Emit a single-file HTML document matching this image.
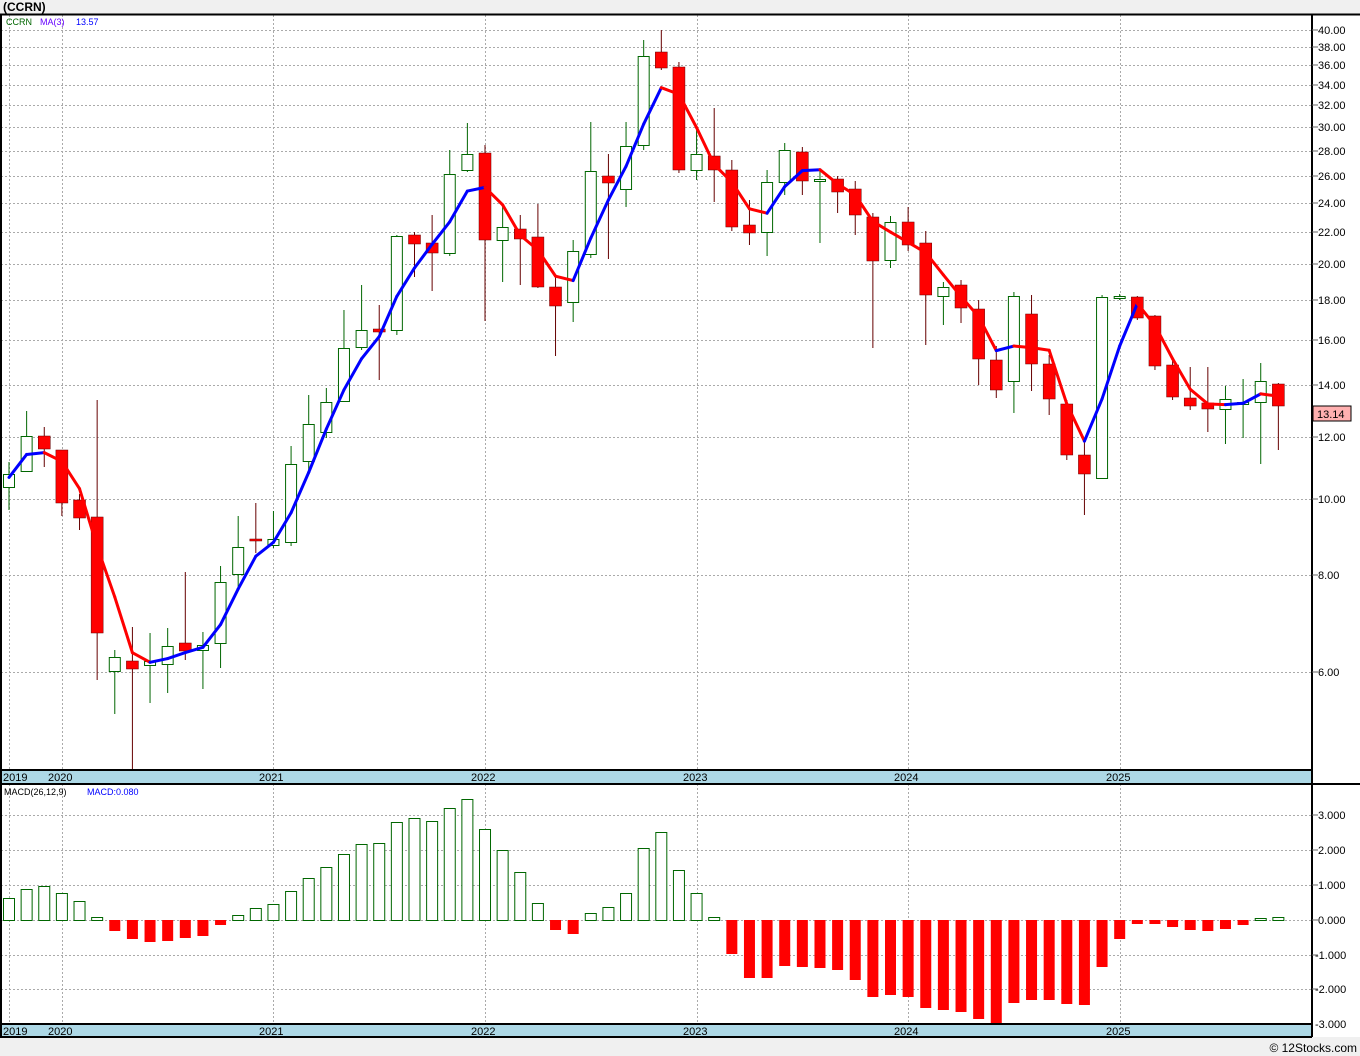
<!DOCTYPE html>
<html><head><meta charset="utf-8"><style>
body{margin:0;width:1360px;height:1056px;background:#f0f0f0;overflow:hidden;font-family:"Liberation Sans",sans-serif}
svg{position:absolute;left:0;top:0}
</style></head><body>
<svg id="s" width="1360" height="1056" xmlns="http://www.w3.org/2000/svg" font-family="Liberation Sans, sans-serif">
<rect x="0" y="0" width="1360" height="1056" fill="#f0f0f0"/>
<text x="3" y="11" font-size="12" font-weight="bold" fill="#000">(CCRN)</text>
<rect x="1" y="14" width="1311" height="756" fill="#fff"/>
<rect x="1" y="784" width="1311" height="240" fill="#fff"/>
<rect x="1312" y="14" width="48" height="1023" fill="#fff"/>
<g id="grid" stroke="#aaa" stroke-dasharray="2,2" stroke-width="1"></g>
<rect x="1" y="770" width="1311" height="13" fill="#add8e6"/>
<rect x="1" y="1024" width="1311" height="13" fill="#add8e6"/>
<g id="bars"></g>
<g id="candles"></g>
<g id="ma"></g>
<g stroke="#000" stroke-width="2" fill="none">
<line x1="0" y1="14.5" x2="1360" y2="14.5"/>
<line x1="1" y1="14" x2="1" y2="1037"/>
<line x1="1312" y1="14" x2="1312" y2="1037"/>
<line x1="0" y1="770" x2="1312" y2="770"/>
<line x1="0" y1="784" x2="1360" y2="784"/>
<line x1="0" y1="1024" x2="1312" y2="1024"/>
<line x1="0" y1="1037" x2="1312" y2="1037"/>
</g>
<g id="ticks" stroke="#666"></g>
<g font-size="11" fill="#000">
<text x="1318" y="34">40.00</text><text x="1318" y="51">38.00</text><text x="1318" y="69">36.00</text><text x="1318" y="89">34.00</text><text x="1318" y="109">32.00</text><text x="1318" y="131">30.00</text><text x="1318" y="155">28.00</text><text x="1318" y="180">26.00</text><text x="1318" y="207">24.00</text><text x="1318" y="236">22.00</text><text x="1318" y="268">20.00</text><text x="1318" y="304">18.00</text><text x="1318" y="344">16.00</text><text x="1318" y="389">14.00</text><text x="1318" y="441">12.00</text><text x="1318" y="503">10.00</text><text x="1318" y="579">8.00</text><text x="1318" y="676">6.00</text>
<text x="1318" y="819">3.000</text><text x="1318" y="854">2.000</text><text x="1318" y="889">1.000</text><text x="1318" y="924">0.000</text><text x="1315" y="959">-1.000</text><text x="1315" y="993">-2.000</text><text x="1315" y="1028">-3.000</text>
</g>
<rect x="1313" y="406" width="38" height="15" fill="#ffb0b0" stroke="#000"/>
<text x="1317" y="418" font-size="11">13.14</text>
<g font-size="11" fill="#000">
<text x="3" y="781">2019</text><text x="48" y="781">2020</text><text x="259" y="781">2021</text><text x="471" y="781">2022</text><text x="683" y="781">2023</text><text x="894" y="781">2024</text><text x="1106" y="781">2025</text>
<text x="3" y="1035">2019</text><text x="48" y="1035">2020</text><text x="259" y="1035">2021</text><text x="471" y="1035">2022</text><text x="683" y="1035">2023</text><text x="894" y="1035">2024</text><text x="1106" y="1035">2025</text>
</g>
<text x="6" y="25" font-size="9" fill="#060">CCRN</text>
<text x="40" y="25" font-size="9" fill="#60f">MA(3)</text>
<text x="76" y="25" font-size="9" fill="#00f">13.57</text>
<text x="4" y="795" font-size="9" fill="#000">MACD(26,12,9)</text>
<text x="87" y="795" font-size="9" fill="#00f">MACD:0.080</text>
<text x="1357" y="1052" font-size="12" text-anchor="end" fill="#000">© 12Stocks.com</text>
</svg>
<script>
var NS="http://www.w3.org/2000/svg";
function el(p,t,a){var e=document.createElementNS(NS,t);for(var k in a)e.setAttribute(k,a[k]);document.getElementById(p).appendChild(e);return e;}
var g=[30,47,65,85,105,127,151,176,203,232,264,300,340,385,437,499,575,672,815,850,885,920,955,989];
g.forEach(function(y){el("grid","line",{x1:1,x2:1312,y1:y+.5,y2:y+.5});el("ticks","line",{x1:1312,x2:1318,y1:y,y2:y});});
[9,62,273,485,697,908,1120].forEach(function(x){el("grid","line",{x1:x+.5,x2:x+.5,y1:15,y2:770});el("grid","line",{x1:x+.5,x2:x+.5,y1:784,y2:1037});});
// [bodyTop, bodyBot, wickTop, wickBot, up]
var C=[[474,487,462,510,1],[436,471,411,472,1],[436,449,427,467,0],[450,503,450,516,0],[500,518,494,530,0],[517,633,400,680,0],[657,671,650,714,1],[661,669,627,770,0],[661,665,633,703,1],[646,664,628,693,1],[643,651,572,660,0],[645,650,632,689,1],[582,643,566,668,1],[547,574,516,590,1],[539,541,503,553,0],[539,545,511,548,1],[464,542,446,546,1],[424,461,395,470,1],[402,432,388,438,1],[348,401,310,401,1],[330,347,285,350,1],[329,332,305,380,0],[236,330,235,335,1],[235,244,232,277,0],[243,253,215,291,0],[174,253,150,256,1],[154,170,123,172,1],[153,240,145,321,0],[227,240,205,282,1],[229,239,215,285,0],[237,287,204,288,0],[287,306,275,356,0],[251,302,240,322,1],[171,254,122,258,1],[176,183,154,259,0],[146,189,122,207,1],[56,145,40,150,1],[52,68,30,70,0],[67,170,62,173,0],[154,170,128,180,1],[156,170,108,202,0],[170,227,160,231,0],[225,233,200,245,0],[182,232,170,256,1],[150,182,143,195,1],[152,181,147,195,0],[179,180,170,243,1],[179,192,176,213,0],[189,215,181,235,0],[217,261,213,348,0],[222,260,216,268,1],[222,245,207,251,0],[243,295,231,345,0],[287,296,282,325,1],[285,308,280,323,0],[309,359,300,385,0],[360,390,346,398,0],[296,381,292,413,1],[314,364,295,391,0],[364,399,355,415,0],[404,455,400,460,0],[455,474,441,515,0],[297,478,295,479,1],[296,297,294,300,1],[297,318,296,320,0],[316,366,315,370,0],[365,397,360,400,0],[398,406,367,410,0],[403,409,367,432,0],[399,409,386,444,1],[402,403,379,438,1],[381,402,363,464,1],[384,406,383,450,0]];
function X(i){return 9+i*17.63;}
var closes=[];
C.forEach(function(c,i){var x=X(i);
 el("candles","line",{x1:x,x2:x,y1:c[2],y2:c[3],stroke:c[4]?"#060":"#600","stroke-width":1});
 var h=Math.max(2,c[1]-c[0]);
 if(c[4])el("candles","rect",{x:x-5.5,y:c[0]+.5,width:11,height:h,fill:"#fff",stroke:"#060"});
 else el("candles","rect",{x:x-6,y:c[0],width:12,height:h,fill:"#f00",stroke:"#600","stroke-width":.5});
 var cy=c[4]?c[0]:c[1];closes.push(40*Math.exp(-(cy-30)/338.4));
});
var ma=[];for(var i=0;i<closes.length;i++){var a=closes.slice(Math.max(0,i-2),i+1);ma.push(a.reduce(function(s,v){return s+v},0)/a.length);}
ma[0]=closes[0]*0.99;
function PY(p){return 30+338.4*Math.log(40/p);}
for(var i=1;i<ma.length;i++){el("ma","line",{x1:X(i-1),y1:PY(ma[i-1]),x2:X(i),y2:PY(ma[i]),stroke:ma[i]>=ma[i-1]?"#00f":"#f00","stroke-width":3,"stroke-linecap":"round"});}
var M=[898,889,886,893,901,917,931,939,942,941,938,936,925,915,908,904,891,878,867,854,844,843,822,818,821,808,799,829,850,872,903,930,934,913,907,893,848,832,870,893,917,954,978,978,966,967,968,970,980,997,995,997,1008,1010,1012,1019,1024,1003,1000,1000,1004,1005,967,939,924,924,927,930,931,929,925,918,917];
var neg={7:1,8:1,9:1,10:1,11:1};
M.forEach(function(y,i){var x=X(i);var red=y>920||neg[i];
 if(neg[i]&&y<920)y=920+(920-y)*0;
 if(red){var yy=y>920?y:936;el("bars","rect",{x:x-5.5,y:920,width:11,height:yy-920,fill:"#f00"});}
 else el("bars","rect",{x:x-5.5,y:y+.5,width:11,height:Math.max(1,920-y),fill:"#fff",stroke:"#060"});
});
</script>
</body></html>
